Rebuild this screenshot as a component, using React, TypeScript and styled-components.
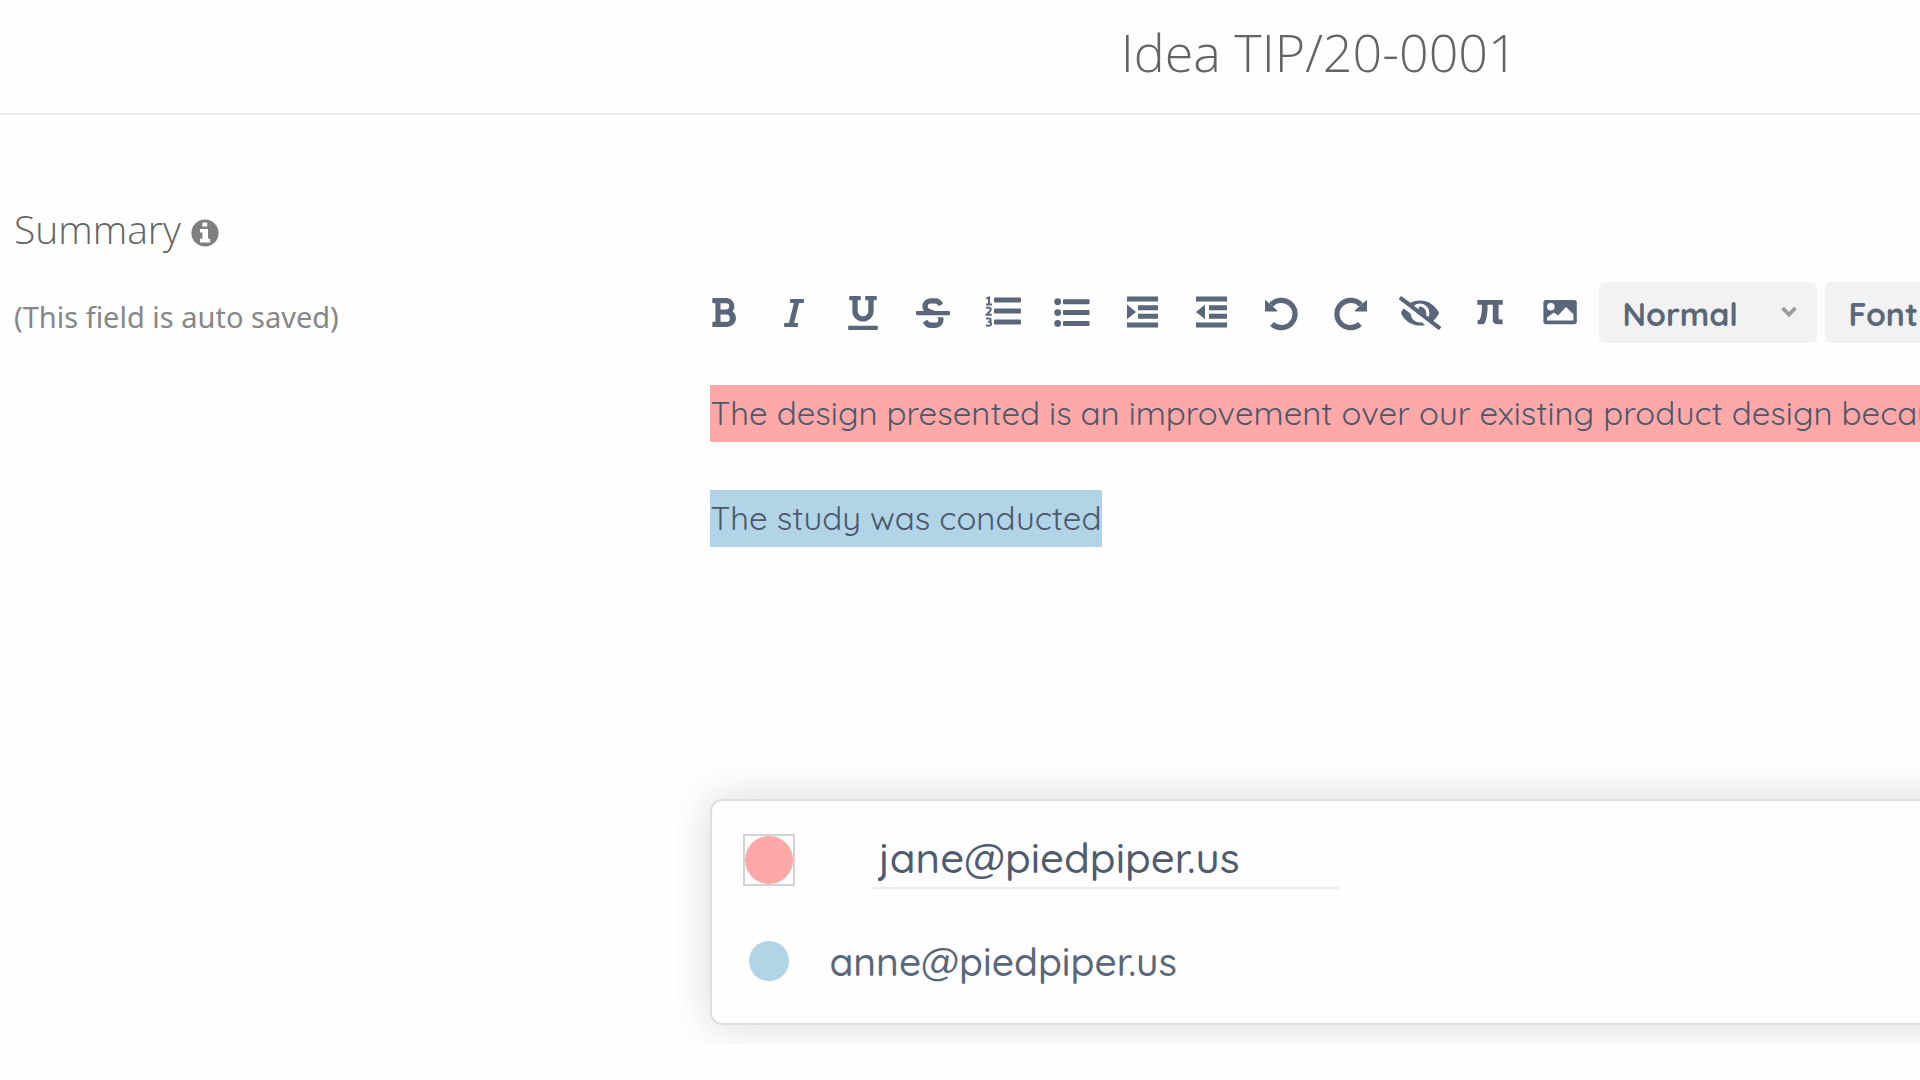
import React from 'react';
import styled, { createGlobalStyle, css } from 'styled-components';
import {
  FaBold,
  FaEyeSlash,
  FaItalic,
  FaStrikethrough,
  FaUnderline,
} from 'react-icons/fa';

const ink = '#5a677b';
const pink = '#ffa8a8';
const blue = '#b1d4e7';

const GlobalStyle = createGlobalStyle`
  *, *::before, *::after { box-sizing: border-box; }
  body {
    margin: 0;
    background: #fefefe;
    color: ${ink};
    font-family: Quicksand, "Open Sans", sans-serif;
    overflow: hidden;
  }
  button, input, select { font: inherit; color: inherit; }
`;

const columns = css`
  display: grid;
  grid-template-columns: 37fr 63fr;
`;

const Header = styled.header`
  ${columns}
  padding-bottom: 9px;
  border-bottom: 2px solid #e8e8e8;
`;

const Title = styled.h1`
  grid-column: 2;
  margin: 0;
  padding-left: 8px;
  text-align: center;
  font: 300 52px/104px 'Open Sans', sans-serif;
  color: #646466;
`;

const Main = styled.main`
  ${columns}
`;

const FieldInfo = styled.section`
  padding: 87px 14px 0;
  font-family: 'Open Sans', sans-serif;
`;

const FieldHeading = styled.div`
  display: flex;
  align-items: center;
  gap: 10px;
`;

const FieldName = styled.h2`
  margin: 0;
  font-size: 39px;
  font-weight: 300;
  line-height: 54px;
  color: #646466;
`;

const InfoButton = styled.button`
  display: flex;
  padding: 8px 0 0;
  border: 0;
  background: none;
  color: #808080;
`;

const FieldNote = styled.p`
  margin: 41px 0 0;
  font-family: 'Noto Sans', sans-serif;
  font-size: 29px;
  line-height: 40px;
  color: #85878a;
`;

const EditorColumn = styled.section`
  min-width: 0;
  padding-top: 167px;
`;

const Toolbar = styled.div`
  display: flex;
  align-items: center;
  height: 61px;
  overflow: hidden;
`;

const ToolGroup = styled.div`
  display: flex;
  flex: none;
  justify-content: space-between;
  width: 863px;
  margin-right: 26px;
`;

const Tool = styled.button`
  display: flex;
  align-items: center;
  justify-content: center;
  width: 27px;
  height: 42px;
  padding: 0;
  border: 0;
  background: none;
  color: ${ink};

  svg { flex: none; }
`;

const Picker = styled.label`
  display: grid;
  flex: none;
  align-items: center;
  width: 218px;
  height: 61px;
  margin-right: 8px;
  border-radius: 6px;
  background: #f2f2f2;

  > * { grid-area: 1 / 1; }
  > svg { justify-self: end; margin: 0 20px 2px 0; pointer-events: none; }
`;

const PickerSelect = styled.select`
  appearance: none;
  width: 100%;
  height: 100%;
  padding: 2px 50px 0 23px;
  border: 0;
  background: none;
  font-size: 32px;
  font-weight: 700;
`;

const EditorBody = styled.div`
  display: flex;
  flex-direction: column;
  align-items: flex-start;
  gap: 48px;
  min-height: 364px;
  margin-top: 42px;
  overflow: hidden;
  outline: none;
`;

const Paragraph = styled.p`
  margin: 0;
  font-size: 33px;
  font-weight: 400;
  line-height: 55px;
  white-space: nowrap;
`;

const Highlight = styled.mark<{ $color: string }>`
  display: block;
  padding-bottom: 2px;
  background: ${(p) => p.$color};
  color: #4c586c;
`;

const AuthorsArea = styled.div`
  margin-left: -36px;
  padding: 50px 0 19px 36px;
  overflow: hidden;
`;

const AuthorsCard = styled.ul`
  display: flex;
  flex-direction: column;
  gap: 47px;
  margin: 0 -48px 0 0;
  padding: 30px 32px 37px 31px;
  border: 2px solid #dbdfe2;
  border-radius: 12px;
  background: #fefefe;
  box-shadow: 0 0 42px rgba(0, 0, 0, 0.15);
  list-style: none;
`;

const AuthorRow = styled.li<{ $gap: number }>`
  display: flex;
  align-items: center;
  gap: ${(p) => p.$gap}px;
`;

const Swatch = styled.button<{ $color: string; $active?: boolean }>`
  display: flex;
  align-items: center;
  justify-content: center;
  width: 52px;
  height: ${(p) => (p.$active ? 52 : 50)}px;
  padding: 0;
  border: ${(p) => (p.$active ? '2px solid #d2d2d2' : '0')};
  background: none;

  &::before {
    content: '';
    width: ${(p) => (p.$active ? 48 : 40)}px;
    height: ${(p) => (p.$active ? 48 : 40)}px;
    border-radius: 50%;
    background: ${(p) => p.$color};
  }
`;

const EmailInput = styled.input`
  width: 468px;
  height: 58px;
  padding: 0 0 3px 7px;
  border: 0;
  border-bottom: 2px solid #ececec;
  background: none;
  color: #4f5b70;
  font-size: 42px;
  font-weight: 500;
  outline: none;
`;

const Email = styled.span`
  padding-top: 2px;
  font-size: 39px;
  font-weight: 500;
  line-height: 48px;
`;

function Glyph({ children }: { children: React.ReactNode }) {
  return (
    <svg width="42" height="42" viewBox="0 0 42 42" fill="currentColor" aria-hidden="true">
      {children}
    </svg>
  );
}

const InfoIcon = () => (
  <svg width="28" height="28" viewBox="0 0 28 28" fill="currentColor" aria-hidden="true">
    <path
      fillRule="evenodd"
      d="M14 .4A13.6 13.6 0 1 0 14 27.6 13.6 13.6 0 1 0 14 .4ZM11.4 3.4H16.2V7.6H11.4ZM9 10H17V19.8H19.2V23.6H9V19.8H11.4V13.6H9Z"
    />
  </svg>
);

const digit = { fill: 'none', stroke: 'currentColor', strokeWidth: 2 };

const NumberedList = () => (
  <Glyph>
    <rect x="12" y="5.5" width="27" height="5" rx="1" />
    <rect x="12" y="16.5" width="27" height="5" rx="1" />
    <rect x="12" y="27.5" width="27" height="5" rx="1" />
    <path {...digit} d="M4.2 6.6 7 5.4V12.6M4 12.6H10" />
    <path {...digit} d="M4.4 16.4C6 15 9 15.4 8.8 17.6 8.7 19.4 6 20.6 4.6 22.8H9.8" />
    <path {...digit} d="M4.2 27C6 25.8 9 26.2 8.8 28.2 8.7 29.6 7.2 29.8 6 29.8 7.6 29.8 9.2 30.2 9.2 31.8 9.2 34 6 34.2 4 33" />
  </Glyph>
);

const BulletList = () => (
  <Glyph>
    {[9.7, 20.6, 31.4].map((y) => (
      <g key={y}>
        <circle cx="6.7" cy={y} r="3.4" />
        <rect x="12" y={y - 2.5} width="26.5" height="5" rx="1" />
      </g>
    ))}
  </Glyph>
);

const Indent = () => (
  <Glyph>
    <path d="M6 4.5H37V9.5H6ZM17 13.2H37V18.2H17ZM17 21.8H37V26.8H17ZM6 30.5H37V35.5H6ZM6 12.5 15 19.9 6 27.3Z" />
  </Glyph>
);

const Outdent = () => (
  <Glyph>
    <path d="M6 4.5H37V9.5H6ZM19 13.2H37V18.2H19ZM19 21.8H37V26.8H19ZM6 30.5H37V35.5H6ZM15 12.5V27.3L6 19.9Z" />
  </Glyph>
);

const undoShape = (
  <>
    <path
      d="M11 13A13.7 13.7 0 1 1 12 32"
      fill="none"
      stroke="currentColor"
      strokeWidth="5.2"
    />
    <path d="M5 8.6Q5 7.6 6 8.4L9 11.2 17 18.2Q17.6 19.6 16.4 19.6H6.2Q5 19.6 5 18.4Z" />
  </>
);

const Undo = () => <Glyph>{undoShape}</Glyph>;

const Redo = () => (
  <Glyph>
    <g transform="translate(42 0) scale(-1 1)">{undoShape}</g>
  </Glyph>
);

const Formula = () => (
  <Glyph>
    <path d="M9 8H33.2Q33.8 8 33.8 8.6V12.8H29.6V26Q29.6 27.6 31 27.6H33.6V31.4Q33.6 32.3 32.6 32.3H29Q23.8 32.3 23.8 27.4V12.8H18.6Q18.8 24 16 30.4 15.2 32.3 13.2 32.3H9.2Q8.6 32.3 8.6 31.6V28H10.4Q13 24 13 12.8H8.3V8.6Q8.3 8 9 8Z" />
  </Glyph>
);

const Picture = () => (
  <Glyph>
    <path
      fillRule="evenodd"
      d="M7 8H35.2Q37.8 8 37.8 10.6V29.6Q37.8 32.2 35.2 32.2H7Q4.4 32.2 4.4 29.6V10.6Q4.4 8 7 8ZM11.8 11A3.8 3.8 0 1 0 11.8 18.6 3.8 3.8 0 1 0 11.8 11ZM8 28.6H34.4V22.2L27 15 19 23.4 15 20.4 8 25.6Z"
    />
  </Glyph>
);

const Chevron = () => (
  <svg width="16" height="12" viewBox="0 0 16 12" fill="none" stroke="#999" strokeWidth="3.6" aria-hidden="true">
    <path d="M1.6 2 8 8.6 14.4 2" />
  </svg>
);

const tools: [string, React.ReactNode][] = [
  ['Bold', <FaBold size={33} />],
  ['Italic', <FaItalic size={32} />],
  ['Underline', <FaUnderline size={34} />],
  ['Strikethrough', <FaStrikethrough size={34} />],
  ['Numbered list', <NumberedList />],
  ['Bulleted list', <BulletList />],
  ['Indent', <Indent />],
  ['Outdent', <Outdent />],
  ['Undo', <Undo />],
  ['Redo', <Redo />],
  ['Hide authors', <FaEyeSlash size={42} />],
  ['Formula', <Formula />],
  ['Insert image', <Picture />],
];

const pickers = [
  { label: 'Text style', options: ['Normal'] },
  { label: 'Font family', options: ['Font'] },
];

export default function App() {
  return (
    <>
      <GlobalStyle />
      <Header>
        <Title>Idea TIP/20-0001</Title>
      </Header>
      <Main>
        <FieldInfo>
          <FieldHeading>
            <FieldName>Summary</FieldName>
            <InfoButton type="button" aria-label="About this field">
              <InfoIcon />
            </InfoButton>
          </FieldHeading>
          <FieldNote>(This field is auto saved)</FieldNote>
        </FieldInfo>
        <EditorColumn>
          <Toolbar role="toolbar" aria-label="Formatting">
            <ToolGroup>
              {tools.map(([label, icon]) => (
                <Tool key={label} type="button" aria-label={label}>
                  {icon}
                </Tool>
              ))}
            </ToolGroup>
            {pickers.map((picker) => (
              <Picker key={picker.label}>
                <PickerSelect aria-label={picker.label}>
                  {picker.options.map((option) => (
                    <option key={option}>{option}</option>
                  ))}
                </PickerSelect>
                <Chevron />
              </Picker>
            ))}
          </Toolbar>
          <EditorBody contentEditable suppressContentEditableWarning spellCheck={false} role="textbox" aria-label="Summary">
            <Paragraph>
              <Highlight $color={pink}>
                The design presented is an improvement over our existing product design because
              </Highlight>
            </Paragraph>
            <Paragraph>
              <Highlight $color={blue}>The study was conducted</Highlight>
            </Paragraph>
          </EditorBody>
          <AuthorsArea>
            <AuthorsCard>
              <AuthorRow $gap={76}>
                <Swatch type="button" $color={pink} $active aria-label="Colour for jane@piedpiper.us" />
                <EmailInput type="text" aria-label="Author email" defaultValue="jane@piedpiper.us" />
              </AuthorRow>
              <AuthorRow $gap={34}>
                <Swatch type="button" $color={blue} aria-label="Colour for anne@piedpiper.us" />
                <Email>anne@piedpiper.us</Email>
              </AuthorRow>
            </AuthorsCard>
          </AuthorsArea>
        </EditorColumn>
      </Main>
    </>
  );
}
